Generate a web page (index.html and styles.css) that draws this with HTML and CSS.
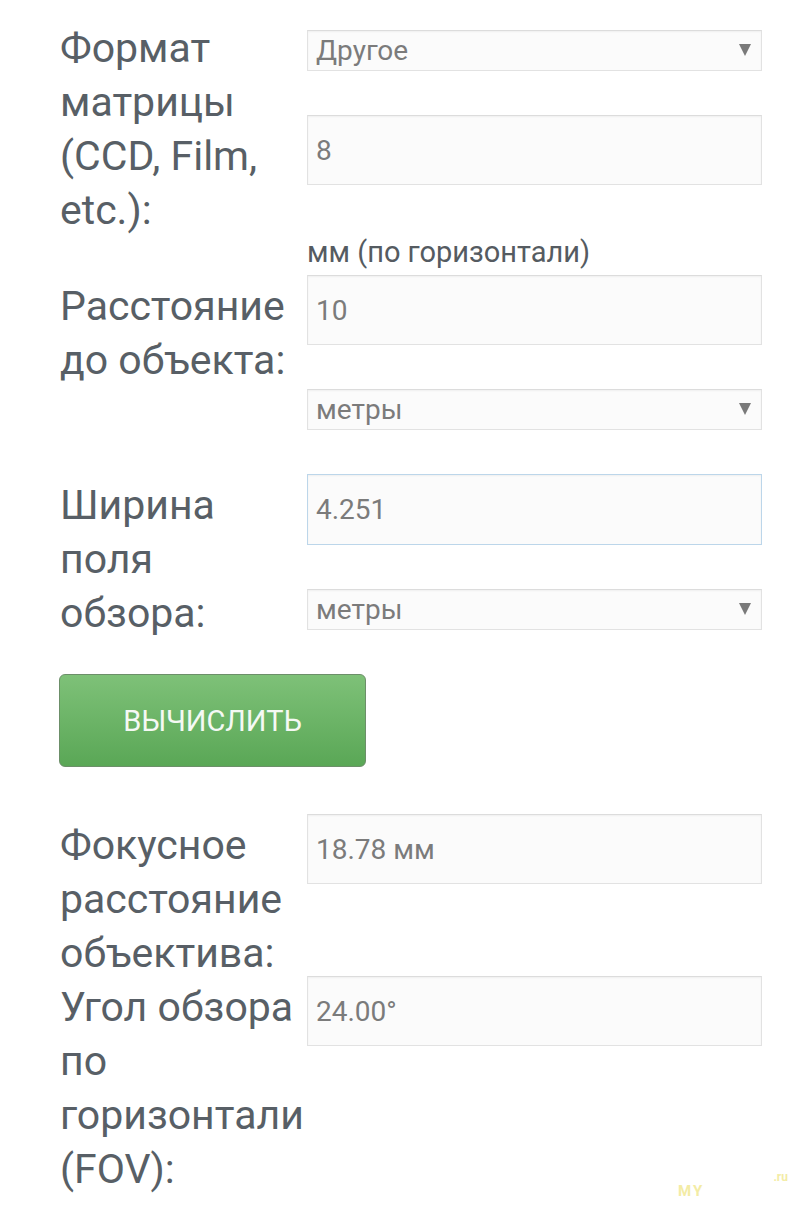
FILE: index.html
```html
<!DOCTYPE html>
<html lang="ru">
<head>
  <meta charset="UTF-8">
  <meta name="viewport" content="width=device-width, initial-scale=1.0">
  <title>Калькулятор угла обзора</title>
  <link rel="stylesheet" href="styles.css">
</head>
<body>
  <div class="calc">
    <!-- Формат матрицы -->
    <div class="row first">
      <label class="label" for="format">Формат матрицы (CCD, Film, etc.):</label>
      <div class="fields">
        <div class="select">
          <select id="format"><option>Другое</option></select>
        </div>
        <input class="field" type="text" id="sensor" value="8">
        <div class="note">мм (по горизонтали)</div>
      </div>
    </div>

    <!-- Расстояние -->
    <div class="row">
      <label class="label" for="distance">Расстояние до объекта:</label>
      <div class="fields">
        <input class="field" type="text" id="distance" value="10">
        <div class="select">
          <select id="distanceUnit"><option>метры</option></select>
        </div>
      </div>
    </div>

    <!-- Ширина поля -->
    <div class="row">
      <label class="label" for="width">Ширина поля обзора:</label>
      <div class="fields">
        <input class="field focus" type="text" id="width" value="4.251">
        <div class="select">
          <select id="widthUnit"><option>метры</option></select>
        </div>
      </div>
    </div>

    <div class="actions">
      <button class="btn" type="button">Вычислить</button>
    </div>

    <!-- Результаты -->
    <div class="row result">
      <label class="label" for="focal">Фокусное расстояние объектива:</label>
      <div class="fields">
        <input class="field" type="text" id="focal" value="18.78 мм" readonly>
      </div>
    </div>

    <div class="row result">
      <label class="label" for="fov">Угол обзора по горизонтали (FOV):</label>
      <div class="fields">
        <input class="field" type="text" id="fov" value="24.00°" readonly>
      </div>
    </div>

    <div class="mark"><span class="mark-my">MY</span><span class="mark-ru">.ru</span></div>
  </div>
</body>
</html>
```

FILE: styles.css
```css
* {
  margin: 0;
  padding: 0;
  box-sizing: border-box;
  font-family: Roboto, "Noto Sans", sans-serif;
}
body {
  background: #fff;
  color: #585f66;
  overflow: hidden;
}
.calc {
  position: relative;
  width: 800px;
  height: 1212px;
  padding: 17px 38px 0 60px;
}
.row {
  display: grid;
  grid-template-columns: 247px 455px;
  align-items: start;
}
.label {
  display: block;
  padding: 4px 9px 0 0;
  margin-bottom: -4px;
  font-size: 41px;
  line-height: 54px;
  color: #585f66;
}
.fields {
  display: flex;
  flex-direction: column;
  gap: 44px;
  padding-bottom: 44px;
}
.row.first .fields {
  padding-top: 13px;
  padding-bottom: 0;
}
.row.result .fields {
  padding-bottom: 0;
}
.field,
.select select {
  width: 100%;
  border: 1px solid #e2e2e2;
  border-top-color: #dcdcdc;
  background: #fbfbfb;
  box-shadow: inset 0 1px 2px rgba(0, 0, 0, 0.05);
  color: #7b7b7b;
  font-size: 28px;
  padding: 0 8px;
  outline: none;
}
.field {
  height: 70px;
}
.field.focus {
  border-color: #bcd6ea;
  height: 71px;
}
.select {
  position: relative;
}
.select select {
  display: block;
  height: 41px;
  appearance: none;
  -webkit-appearance: none;
  border-radius: 0;
}
.select::after {
  content: "";
  position: absolute;
  right: 11px;
  top: 14px;
  border-left: 6px solid transparent;
  border-right: 6px solid transparent;
  border-top: 12px solid #7a7a7a;
  pointer-events: none;
}
.note {
  font-size: 29px;
  line-height: 46px;
  color: #555b61;
}
.actions {
  margin-bottom: 47px;
}
.btn {
  width: 307px;
  height: 93px;
  margin-left: -1px;
  border: 1px solid #6c8f69;
  border-radius: 6px;
  background: linear-gradient(#7ec178, #5aa756);
  color: #f5f9f4;
  font-size: 29px;
  text-transform: uppercase;
  cursor: pointer;
}
.mark {
  position: absolute;
  right: 12px;
  bottom: 12px;
  width: 110px;
  height: 30px;
  font-weight: bold;
  color: #f1e88f;
  opacity: 0.8;
}
.mark-my {
  position: absolute;
  left: 0;
  bottom: 0;
  font-size: 15px;
  letter-spacing: 2px;
}
.mark-ru {
  position: absolute;
  right: 0;
  top: 0;
  font-size: 12px;
}
```
